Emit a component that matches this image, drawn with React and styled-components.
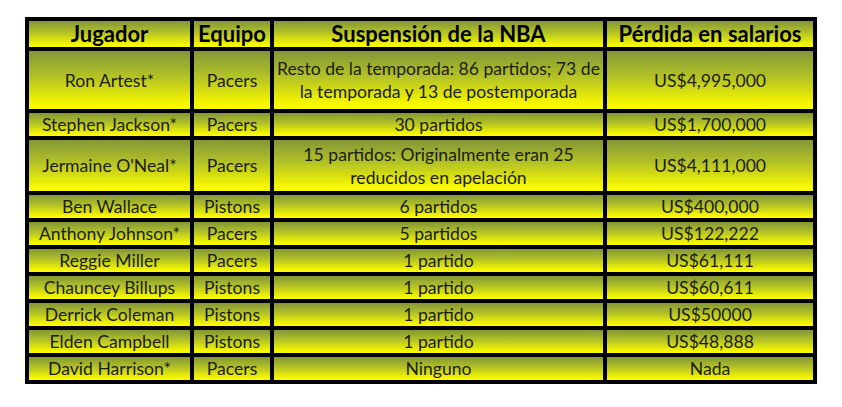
import React from "react";
import styled, { createGlobalStyle } from "styled-components";

const GlobalStyle = createGlobalStyle`
  body {
    margin: 0;
    background: #ffffff;
    font-family: Lato, "Open Sans", sans-serif;
  }
`;

const Page = styled.div`
  padding: 17px 0 0 25px;
`;

const Table = styled.table`
  width: 792px;
  table-layout: fixed;
  border-collapse: separate;
  border-spacing: 0;
  border: 2px solid #000;
  box-sizing: border-box;
`;

const Row = styled.tr`
  & > th,
  & > td {
    height: ${(p) => p.$h}px;
  }
`;

const Cell = styled.td`
  border: 2px solid #000;
  padding: 0 3px;
  text-align: center;
  vertical-align: middle;
  background: linear-gradient(to bottom, #849638 0%, #b4c326 45%, #f2f400 88%, #ffff00 100%);
  color: #1c1c14;
  font-size: 17.6px;
  line-height: 23px;
`;

const Head = styled(Cell).attrs({ as: "th" })`
  color: #000;
  font-size: 22px;
  font-weight: 700;
  line-height: 24px;
`;

const rows = [
  ["Ron Artest*", "Pacers", "Resto de la temporada: 86 partidos; 73 de la temporada y 13 de postemporada", "US$4,995,000", 58],
  ["Stephen Jackson*", "Pacers", "30 partidos", "US$1,700,000", 23],
  ["Jermaine O'Neal*", "Pacers", "15 partidos: Originalmente eran 25 reducidos en apelación", "US$4,111,000", 51],
  ["Ben Wallace", "Pistons", "6 partidos", "US$400,000", 22],
  ["Anthony Johnson*", "Pacers", "5 partidos", "US$122,222", 22],
  ["Reggie Miller", "Pacers", "1 partido", "US$61,111", 22],
  ["Chauncey Billups", "Pistons", "1 partido", "US$60,611", 22],
  ["Derrick Coleman", "Pistons", "1 partido", "US$50000", 22],
  ["Elden Campbell", "Pistons", "1 partido", "US$48,888", 22],
  ["David Harrison*", "Pacers", "Ninguno", "Nada", 22],
];

export default function App() {
  return (
    <>
      <GlobalStyle />
      <Page>
        <Table>
          <colgroup>
            <col style={{ width: 165 }} />
            <col style={{ width: 80 }} />
            <col style={{ width: 333 }} />
            <col style={{ width: 210 }} />
          </colgroup>
          <thead>
            <Row $h={26}>
              <Head>Jugador</Head>
              <Head>Equipo</Head>
              <Head>Suspensión de la NBA</Head>
              <Head>Pérdida en salarios</Head>
            </Row>
          </thead>
          <tbody>
            {rows.map(([player, team, susp, loss, h]) => (
              <Row key={player} $h={h}>
                <Cell>{player}</Cell>
                <Cell>{team}</Cell>
                <Cell>{susp}</Cell>
                <Cell>{loss}</Cell>
              </Row>
            ))}
          </tbody>
        </Table>
      </Page>
    </>
  );
}
